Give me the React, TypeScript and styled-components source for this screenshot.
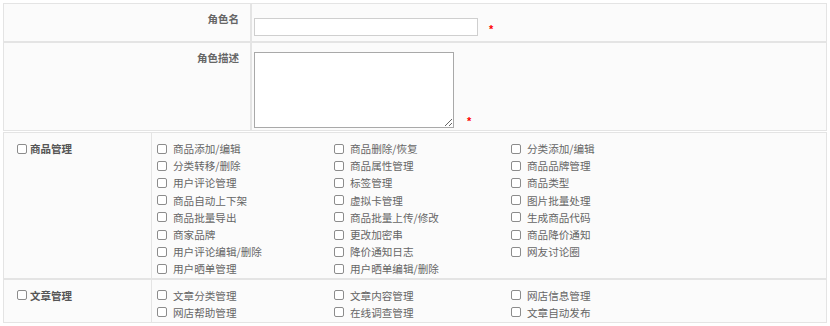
import React from "react";
import styled, { createGlobalStyle } from "styled-components";

const GlobalStyle = createGlobalStyle`
  html, body { margin: 0; padding: 0; background: #ffffff; }
  body { font-family: "Noto Sans CJK SC", "Noto Sans", sans-serif; }
`;

const Page = styled.div`
  width: 824px;
  padding: 3px 3px 0 3px;
`;

const FormTable = styled.div`
  display: grid;
  grid-template-columns: 246px 1fr;
  grid-template-rows: 37px 87px;
  gap: 2px;
  padding: 1px;
  background: #e4e4e4;
`;

const LabelCell = styled.div`
  background: #fbfbfb;
  text-align: right;
  padding: 8px 11px 0 0;
  font-size: 10.5px;
  line-height: 14px;
  font-weight: bold;
  color: #666;
`;

const ValueCell = styled.div<{ $bottom: number }>`
  background: #fbfbfb;
  padding: 0 0 ${(p) => p.$bottom}px 2px;
  display: flex;
  align-items: flex-end;
`;

const TextInput = styled.input`
  box-sizing: border-box;
  width: 224px;
  height: 18px;
  margin: 0;
  border: 1px solid #cfcfcf;
  background: #fff;
  outline: none;
`;

const TextArea = styled.textarea`
  box-sizing: border-box;
  width: 200px;
  height: 76px;
  margin: 0;
  border: 1px solid #a9a9a9;
  background: #fff;
  resize: both;
  outline: none;
`;

const Required = styled.span<{ $gap: number }>`
  margin-left: ${(p) => p.$gap}px;
  color: #ff0000;
  font-size: 11px;
  line-height: 14px;
  font-weight: bold;
  font-family: "Liberation Sans", sans-serif;
`;

const PermTable = styled.div`
  margin-top: 1px;
  display: grid;
  grid-template-columns: 147px 1fr;
  row-gap: 2px;
  column-gap: 1px;
  padding: 1px;
  background: #e4e4e4;
`;

const GroupCell = styled.label<{ $pb: number }>`
  background: #fbfbfb;
  padding: 7px 0 ${(p) => p.$pb}px 13px;
  display: flex;
  align-items: flex-start;
  font-size: 10.5px;
  line-height: 17.2px;
  font-weight: bold;
  color: #555;
`;

const GroupLabelRow = styled.span`
  display: flex;
  align-items: center;
  gap: 3px;
`;

const ItemsCell = styled.div<{ $pb: number }>`
  background: #fbfbfb;
  padding: 7px 0 ${(p) => p.$pb}px 5px;
  display: grid;
  grid-template-columns: repeat(3, 177px);
  grid-auto-rows: 17.2px;
`;

const Item = styled.label`
  display: flex;
  align-items: center;
  gap: 6px;
  font-size: 10.6px;
  line-height: 17.2px;
  color: #666;
  white-space: nowrap;
`;

const Box = styled.input.attrs({ type: "checkbox" })`
  appearance: none;
  -webkit-appearance: none;
  box-sizing: border-box;
  width: 10px;
  height: 10px;
  margin: 0;
  border: 1px solid #8c8c8c;
  border-radius: 2px;
  background: #fff;
  flex: none;
`;

const groups = [
  {
    name: "商品管理",
    pb: 0,
    items: [
      "商品添加/编辑", "商品删除/恢复", "分类添加/编辑",
      "分类转移/删除", "商品属性管理", "商品品牌管理",
      "用户评论管理", "标签管理", "商品类型",
      "商品自动上下架", "虚拟卡管理", "图片批量处理",
      "商品批量导出", "商品批量上传/修改", "生成商品代码",
      "商家品牌", "更改加密串", "商品降价通知",
      "用户评论编辑/删除", "降价通知日志", "网友讨论圈",
      "用户晒单管理", "用户晒单编辑/删除",
    ],
  },
  {
    name: "文章管理",
    pb: 1,
    items: ["文章分类管理", "文章内容管理", "网店信息管理", "网店帮助管理", "在线调查管理", "文章自动发布"],
  },
];

export default function App() {
  return (
    <>
      <GlobalStyle />
      <Page>
        <FormTable>
          <LabelCell>角色名</LabelCell>
          <ValueCell $bottom={5}>
            <TextInput type="text" />
            <Required $gap={11}>*</Required>
          </ValueCell>
          <LabelCell>角色描述</LabelCell>
          <ValueCell $bottom={2}>
            <TextArea />
            <Required $gap={13}>*</Required>
          </ValueCell>
        </FormTable>
        <PermTable>
          {groups.map((g) => (
            <React.Fragment key={g.name}>
              <GroupCell $pb={g.pb}>
                <GroupLabelRow>
                  <Box />
                  {g.name}
                </GroupLabelRow>
              </GroupCell>
              <ItemsCell $pb={g.pb}>
                {g.items.map((it) => (
                  <Item key={it}>
                    <Box />
                    {it}
                  </Item>
                ))}
              </ItemsCell>
            </React.Fragment>
          ))}
        </PermTable>
      </Page>
    </>
  );
}
